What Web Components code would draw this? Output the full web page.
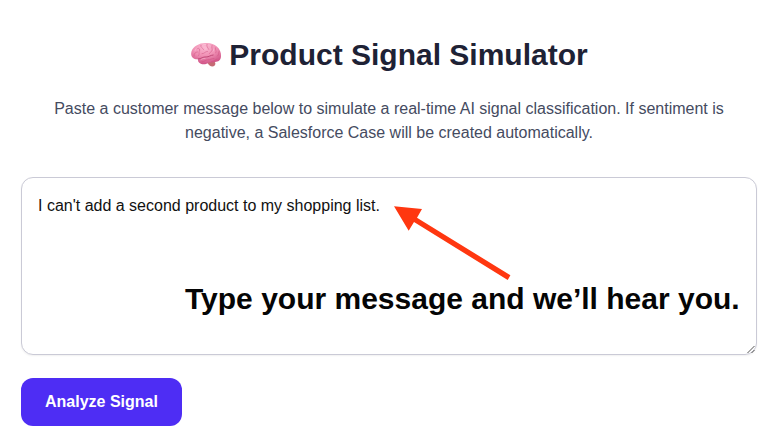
<!DOCTYPE html>
<html lang="en">
<head>
<meta charset="utf-8">
<title>Product Signal Simulator</title>
<style>
body { margin: 0; background: #fff; font-family: "Liberation Sans", Arial, sans-serif; }
</style>
</head>
<body>
<signal-page>
  <signal-heading slot="title">Product Signal Simulator</signal-heading>
  <signal-intro slot="intro">Paste a customer message below to simulate a real-time AI signal classification. If sentiment is negative, a Salesforce Case will be created automatically.</signal-intro>
  <message-field>I can't add a second product to my shopping list.
    <callout-note slot="note">Type your message and we’ll hear you.</callout-note>
  </message-field>
  <action-button>Analyze Signal</action-button>
</signal-page>
<script>
const define = (name, html) => customElements.define(name, class extends HTMLElement {
  constructor() {
    super();
    this.attachShadow({ mode: "open" }).innerHTML = html;
  }
});

define("brain-icon", `
<style>:host { display: block; width: 32px; height: 26px; } svg { display: block; }</style>
<svg width="32" height="26" viewBox="0 0 32 27" preserveAspectRatio="none" aria-hidden="true">
  <defs>
    <radialGradient id="g" cx=".45" cy=".2" r=".8">
      <stop offset="0" stop-color="#fbb9d2"/><stop offset=".5" stop-color="#f090b4"/><stop offset="1" stop-color="#cf5286"/>
    </radialGradient>
  </defs>
  <path d="M17 20.500c1 2.600 2.700 4.900 5 5 2.300.1 3.700-1.700 3.300-3.600l-1.500-2.900z" fill="#c66a74"/>
  <path d="M1.200 13C1 9 3 5.500 6.500 3.600 9.500 1.500 13 .8 16 1c4-.3 8 .9 10.800 3.600 3 2.500 4.500 6.500 4.200 9.900 0 3.400-1.800 5.800-4.800 6-2.600 1-5.200.9-7 .5-2.500 2.200-5.700 2.800-8.400 1.500-2.500-1-3.100-2.800-2.700-4.600C4.700 18.500 1.500 16.500 1.200 13z" fill="url(#g)"/>
  <path d="M8.200 17.700c3.300-.2 4.500-2.500 8-2.200 2.700.2 4-1.800 7-2" fill="none" stroke="#b73f6e" stroke-width="1" stroke-linecap="round" opacity=".85"/>
  <g fill="none" stroke="#cf4f7e" stroke-width=".8" stroke-linecap="round" stroke-linejoin="round" opacity=".6">
    <path d="M4 14.500c-.2-2.500 1.300-4 3.500-4.200M7 6.500c2.500-.5 3.300 1.300 2.300 3.300-.6 1.500.4 2.500-.6 4.200"/>
    <path d="M11 3.500c-1 2.200 1.900 2.400 2.600 4.500M12 12.200c2.500.1 3-2.600 5.500-2.400M17 2.600c-.8 2.200.9 3 1.700 5"/>
    <path d="M22 3.700c-1 2 1 3.400-.2 5.600-.6 1.400-2 1.300-2.400 2.600M25.500 6c-.8 2 1.500 3 .3 5.200M29 10c-1 1.500.4 3-1.500 4.600"/>
    <path d="M12 20.500c2.600.1 3-1.900 5.700-2 2.900 0 3.800-1.600 6.200-1.400M21.500 20.500c2-.7 3.500-.3 5-2.700"/>
  </g>
  <g fill="none" stroke="#ffd7e6" stroke-width=".8" stroke-linecap="round" opacity=".5">
    <path d="M5 9c.3-1.600 1.200-2.600 2.500-3M12.800 3.300c1-.8 1.800-.9 2.800-.7M18.700 3c1 .2 1.600.6 1.900 1.200M15 7.500c.7-.5 1.200-.6 1.800-.3M23.500 7.200c.4 1 .2 1.600-.1 2.200M11 18.300c1-.9 2.300-1.400 4-1.200"/>
  </g>
</svg>`);

define("signal-heading", `
<style>
:host { display: flex; justify-content: center; align-items: center; gap: 7px; height: 40px; }
h1 { margin: 0; font-size: 30px; line-height: 40px; font-weight: 700; color: #1e2235; white-space: nowrap; }
</style>
<brain-icon></brain-icon><h1><slot></slot></h1>`);

define("signal-intro", `
<style>
:host { display: block; }
p { margin: 0; font-size: 16px; line-height: 24px; color: #454b5f; text-align: center; }
</style>
<p><slot></slot></p>`);

define("callout-note", `
<style>
:host { display: block; }
svg { position: absolute; left: 371px; top: 27px; }
p { position: absolute; left: 163px; top: 103px; margin: 0; font: 700 30px/36px "Liberation Sans", Arial, sans-serif; color: #050505; white-space: nowrap; }
</style>
<svg width="120" height="80" viewBox="393 205 120 80" aria-hidden="true">
  <path fill="#ff3710" d="M394 206.300 422 209 417 217.700 510.400 275.300 507.700 280 414 222 408.700 230.700z"/>
</svg>
<p><slot></slot></p>`);

define("message-field", `
<style>
:host { display: block; position: relative; box-sizing: border-box; height: 178px; padding: 16px; border: 1px solid #cacad6; border-radius: 12px; background: #fff; box-shadow: 0 1px 2px rgba(0,0,0,.06); font-size: 16px; line-height: 24px; color: #111; }
.grip { position: absolute; right: 0; bottom: 0; }
</style>
<slot></slot><slot name="note"></slot>
<svg class="grip" width="10" height="10" viewBox="0 0 10 10" aria-hidden="true"><path d="M1.500 9 8.500 2M5.500 9 8.500 6" stroke="#555" stroke-width="1" fill="none"/></svg>`);

define("action-button", `
<style>
:host { display: block; }
button { display: block; width: 161px; height: 48px; padding: 0; border: 0; border-radius: 12px; background: #4e2df4; color: #fff; font: 700 16px/24px "Liberation Sans", Arial, sans-serif; }
</style>
<button><slot></slot></button>`);

define("signal-page", `
<style>
:host { display: flex; flex-direction: column; box-sizing: border-box; height: 444px; padding: 35px 19px 18px 21px; }
.intro { margin: 22px 0 32px; }
.fields { display: flex; flex-direction: column; gap: 23px; }
</style>
<slot name="title"></slot>
<div class="intro"><slot name="intro"></slot></div>
<div class="fields"><slot></slot></div>`);
</script>
</body>
</html>
